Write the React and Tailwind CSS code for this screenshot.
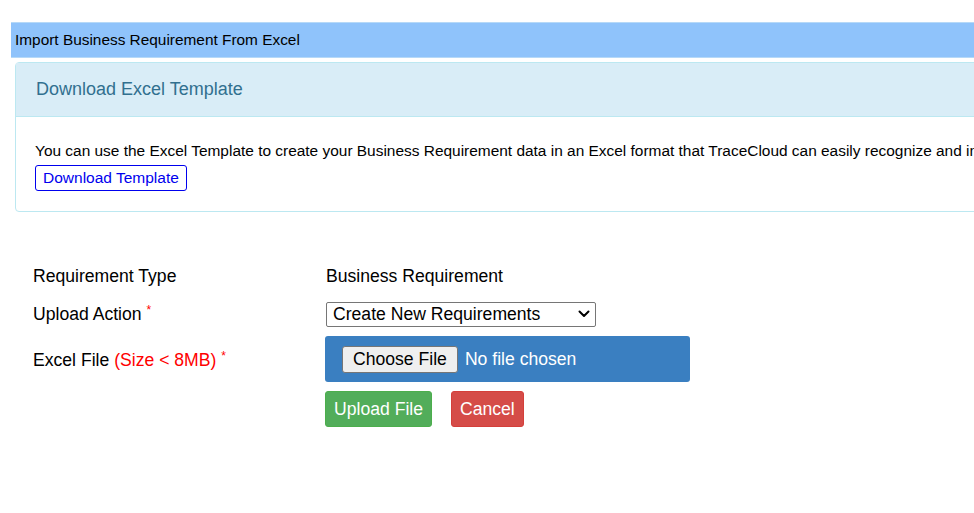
import React from "react";

function App() {
  return (
    <div
      className="w-[974px] h-[513px] bg-white overflow-hidden pt-[22px]"
      style={{ fontFamily: '"Liberation Sans", Arial, sans-serif' }}
    >
      {/* 标题栏 */}
      <div className="ml-[11px] h-[36px] bg-[#8fc3fb] border-y border-[#b6d9f8] flex items-center pl-[4px] text-[15.4px] text-black">
        Import Business Requirement From Excel
      </div>

      {/* 模板下载面板 */}
      <div className="ml-[15px] mt-[4px] w-[1000px] border border-[#bce8f1] rounded-[4px] bg-white">
        <div className="h-[54px] bg-[#d9edf7] border-b border-[#bce8f1] flex items-center pl-[20px] text-[18px] text-[#31708f]">
          Download Excel Template
        </div>
        <div className="pl-[19px] pt-[24px] pb-[20px]">
          <p className="text-[15.45px] text-black whitespace-nowrap leading-[20px]">
            You can use the Excel Template to create your Business Requirement data in an Excel format that TraceCloud can easily recognize and import.
          </p>
          <button className="mt-[4px] h-[26px] px-[7px] border border-[#0000ee] rounded-[3px] text-[15.5px] text-[#0000ee] bg-white leading-none">
            Download Template
          </button>
        </div>
      </div>

      {/* 表单区 */}
      <div className="ml-[33px] mt-[52px] text-[17.6px] text-black">
        <div className="flex items-center h-[24px]">
          <div className="w-[293px]">Requirement Type</div>
          <div>Business Requirement</div>
        </div>
        <div className="flex items-center h-[26px] mt-[13px]">
          <div className="w-[293px] self-start">
            Upload Action <span className="text-[#ff0000] text-[12px] align-top">*</span>
          </div>
          <div className="w-[270px] h-[25px] border border-[#767676] rounded-[2px] bg-white flex items-center justify-between pl-[6px] pr-[4px]">
            <span>Create New Requirements</span>
            <svg width="14" height="14" viewBox="0 0 14 14" fill="none">
              <path d="M2.5 4.5 L7 9 L11.5 4.5" stroke="black" strokeWidth="2" strokeLinecap="round" strokeLinejoin="round" />
            </svg>
          </div>
        </div>
        <div className="flex mt-[9px]">
          <div className="w-[292px] pt-[11px]">
            Excel File <span className="text-[#ff0000]">(Size &lt; 8MB)</span>{" "}
            <span className="text-[#ff0000] text-[12px] align-top">*</span>
          </div>
          <div>
            <div className="w-[365px] h-[46px] bg-[#3a7fc1] rounded-[3px] flex items-center pl-[17px]">
              <div className="h-[27px] px-[10px] bg-[#efefef] border border-[#767676] rounded-[3px] flex items-center">
                Choose File
              </div>
              <span className="ml-[7px] text-white">No file chosen</span>
            </div>
            <div className="flex gap-[19px] mt-[9px]">
              <button className="h-[36px] px-[8px] bg-[#52ad5a] border border-[#4cae4c] rounded-[3px] text-white">
                Upload File
              </button>
              <button className="h-[36px] px-[8px] bg-[#d54c48] border border-[#d43f3a] rounded-[3px] text-white">
                Cancel
              </button>
            </div>
          </div>
        </div>
      </div>
    </div>
  );
}

export default App;
